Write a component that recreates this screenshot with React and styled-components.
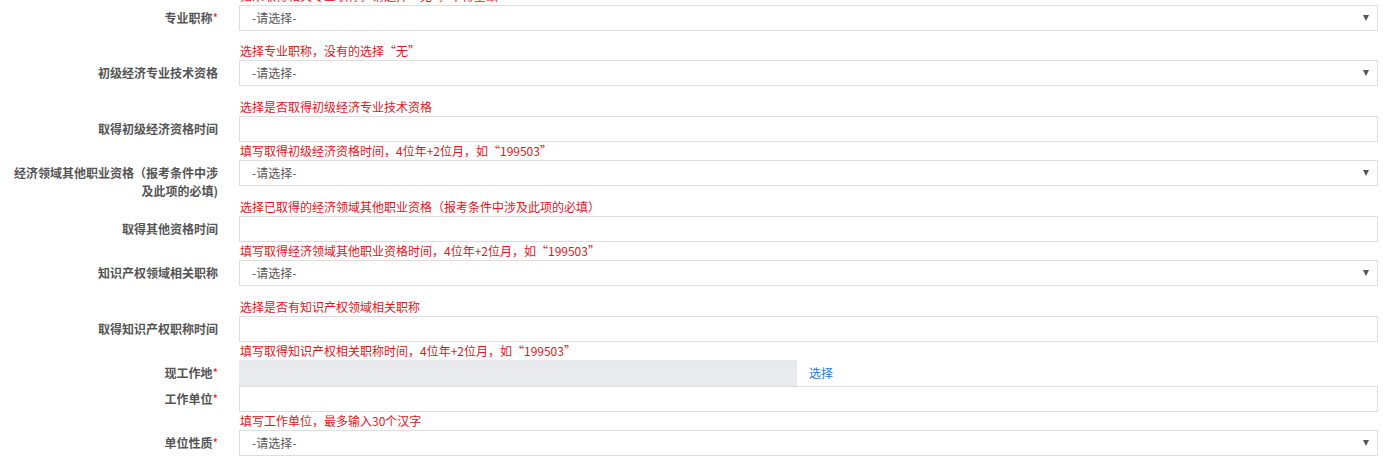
import React from 'react';
import styled, { createGlobalStyle } from 'styled-components';

const GlobalStyle = createGlobalStyle`
  html, body {
    margin: 0;
    padding: 0;
    background: #fff;
    overflow: hidden;
  }
  body {
    font-family: "Noto Sans CJK SC", "Liberation Sans", sans-serif;
    font-size: 12px;
    color: #555;
  }
`;

const Form = styled.div`
  display: flex;
  flex-direction: column;
  margin-top: -13px;
  width: 1378px;
`;

const Group = styled.div`
  display: flex;
  align-items: flex-start;
`;

const Label = styled.div`
  flex: none;
  width: 239px;
  box-sizing: border-box;
  padding: 4px 21px 0 12px;
  text-align: right;
  line-height: 18px;
  font-weight: bold;
  color: #555;
`;

const Star = styled.span`
  color: #e0252b;
  font-weight: normal;
`;

const Control = styled.div`
  flex: 1;
  display: flex;
  flex-direction: column;
  min-width: 0;
`;

const Line = styled.div`
  display: flex;
  align-items: center;
`;

const Box = styled.div`
  box-sizing: border-box;
  flex: none;
  height: 26px;
  width: ${p => (p.$w ? `${p.$w}px` : '100%')};
  border: 1px solid ${p => (p.$disabled ? '#e6e8eb' : '#dedede')};
  background: ${p => (p.$disabled ? '#e8eaed' : '#fff')};
  display: flex;
  align-items: center;
  justify-content: space-between;
  padding: 0 8px 0 12px;
  color: #555;
  line-height: 18px;
`;

const Caret = styled.span`
  width: 0;
  height: 0;
  border-left: 3px solid transparent;
  border-right: 3px solid transparent;
  border-top: 6px solid #555;
`;

const Link = styled.a`
  margin-left: 12px;
  color: #1e78d7;
  text-decoration: none;
  line-height: 18px;
`;

const Help = styled.div`
  color: #e0161c;
  line-height: 18px;
  height: 18px;
  margin-top: ${p => p.$gap}px;
  padding-left: 1px;
  white-space: nowrap;
`;

const rows = [
  { label: '专业职称', req: true, type: 'select', gap: 11, help: '选择专业职称，没有的选择“无”' },
  { label: '初级经济专业技术资格', type: 'select', help: '选择是否取得初级经济专业技术资格' },
  { label: '取得初级经济资格时间', type: 'input', help: '填写取得初级经济资格时间，4位年+2位月，如“199503”' },
  { label: '经济领域其他职业资格（报考条件中涉及此项的必填)', type: 'select', help: '选择已取得的经济领域其他职业资格（报考条件中涉及此项的必填）' },
  { label: '取得其他资格时间', type: 'input', help: '填写取得经济领域其他职业资格时间，4位年+2位月，如“199503”' },
  { label: '知识产权领域相关职称', type: 'select', help: '选择是否有知识产权领域相关职称' },
  { label: '取得知识产权职称时间', type: 'input', help: '填写取得知识产权相关职称时间，4位年+2位月，如“199503”' },
  { label: '现工作地', req: true, type: 'pick' },
  { label: '工作单位', req: true, type: 'input', help: '填写工作单位，最多输入30个汉字' },
  { label: '单位性质', req: true, type: 'select' },
];

function Field({ row }) {
  let control;
  if (row.type === 'select') {
    control = (
      <Box>
        <span>-请选择-</span>
        <Caret />
      </Box>
    );
  } else if (row.type === 'pick') {
    control = (
      <Line>
        <Box $w={558} $disabled />
        <Link href="#">选择</Link>
      </Line>
    );
  } else {
    control = <Box />;
  }
  const gap = row.gap ?? (row.type === 'select' ? 12 : 0);
  return (
    <Group>
      <Label>
        {row.label}
        {row.req && <Star>*</Star>}
      </Label>
      <Control>
        {control}
        {row.help && <Help $gap={gap}>{row.help}</Help>}
      </Control>
    </Group>
  );
}

export default function App() {
  return (
    <>
      <GlobalStyle />
      <Form>
        <Group>
          <Label />
          <Control>
            <Help $gap={0}>如未取得相关专业职称，请选择“无”，不得空缺</Help>
          </Control>
        </Group>
        {rows.map(r => (
          <Field key={r.label} row={r} />
        ))}
      </Form>
    </>
  );
}
